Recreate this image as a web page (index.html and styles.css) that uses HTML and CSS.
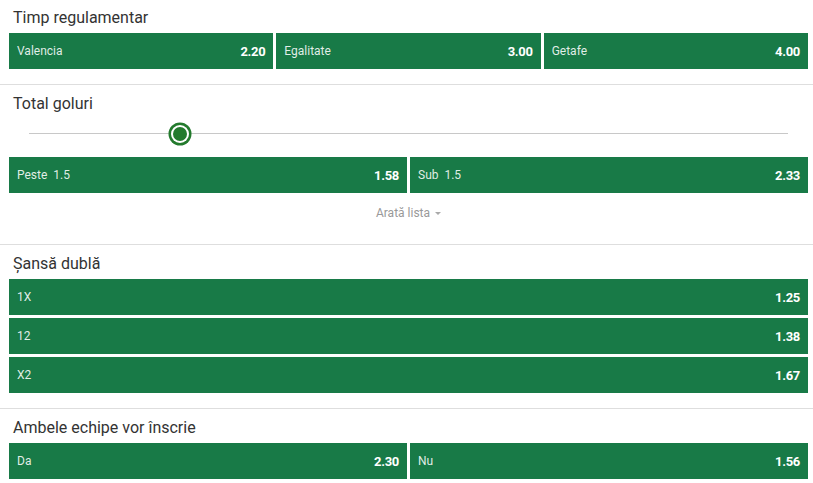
FILE: index.html
```html
<!DOCTYPE html>
<html lang="ro">
<head>
    <meta charset="UTF-8">
    <meta name="viewport" content="width=device-width, initial-scale=1.0">
    <title>Pariuri - Valencia vs Getafe</title>
    <link rel="stylesheet" href="styles.css">
</head>
<body>
    <div class="market first">
        <h3 class="market-title">Timp regulamentar</h3>
        <div class="odds-row cols-3">
            <button class="odd"><span class="odd-label">Valencia</span><span class="odd-price">2.20</span></button>
            <button class="odd"><span class="odd-label">Egalitate</span><span class="odd-price">3.00</span></button>
            <button class="odd"><span class="odd-label">Getafe</span><span class="odd-price">4.00</span></button>
        </div>
    </div>

    <div class="market">
        <h3 class="market-title">Total goluri</h3>
        <div class="slider">
            <div class="slider-track"></div>
            <div class="slider-knob"></div>
        </div>
        <div class="odds-row cols-2">
            <button class="odd"><span class="odd-label">Peste&nbsp; 1.5</span><span class="odd-price">1.58</span></button>
            <button class="odd"><span class="odd-label">Sub&nbsp; 1.5</span><span class="odd-price">2.33</span></button>
        </div>
        <div class="show-more">
            Arată lista
            <svg class="caret" width="6" height="3" viewBox="0 0 6 3"><path d="M0 0h6L3 3z" fill="#aaa"/></svg>
        </div>
    </div>

    <div class="market">
        <h3 class="market-title">Șansă dublă</h3>
        <div class="odds-list">
            <button class="odd"><span class="odd-label">1X</span><span class="odd-price">1.25</span></button>
            <button class="odd"><span class="odd-label">12</span><span class="odd-price">1.38</span></button>
            <button class="odd"><span class="odd-label">X2</span><span class="odd-price">1.67</span></button>
        </div>
    </div>

    <div class="market last">
        <h3 class="market-title">Ambele echipe vor înscrie</h3>
        <div class="odds-row cols-2">
            <button class="odd"><span class="odd-label">Da</span><span class="odd-price">2.30</span></button>
            <button class="odd"><span class="odd-label">Nu</span><span class="odd-price">1.56</span></button>
        </div>
    </div>
</body>
</html>
```

FILE: styles.css
```css
body {
    font-family: Roboto, "Liberation Sans", Arial, sans-serif;
    margin: 0;
    background: #fff;
    color: #333;
}

.market {
    padding: 9px 5px 15px 9px;
    border-bottom: 1px solid #dedede;
}
.market.first {
    padding-top: 8px;
}
.market.last {
    border-bottom: none;
    padding-bottom: 4px;
}

.market-title {
    margin: 0 0 5px 4px;
    font-size: 16px;
    font-weight: 400;
    line-height: 20px;
    color: #333;
}

.odds-row {
    display: grid;
    gap: 3px;
}
.cols-3 {
    grid-template-columns: repeat(3, 1fr);
}
.cols-2 {
    grid-template-columns: repeat(2, 1fr);
}
.odds-list {
    display: flex;
    flex-direction: column;
    gap: 3px;
}

.odd {
    display: flex;
    align-items: center;
    justify-content: space-between;
    height: 36px;
    margin: 0;
    padding: 0 8px 0 8px;
    background-color: #187a47;
    border: none;
    border-radius: 0;
    font-family: inherit;
    cursor: pointer;
}
.odd-label {
    font-size: 12px;
    color: rgba(255, 255, 255, 0.88);
}
.odd-price {
    font-size: 13px;
    font-weight: 700;
    color: #fff;
    letter-spacing: -0.3px;
}

.slider {
    position: relative;
    height: 24px;
    margin: 8px 20px 11px 20px;
}
.slider-track {
    position: absolute;
    left: 0;
    right: 0;
    top: 11px;
    height: 1px;
    background: #c8c8c8;
}
.slider-knob {
    position: absolute;
    left: 151px;
    top: 5px;
    width: 14px;
    height: 14px;
    margin-left: -7px;
    border-radius: 50%;
    background: #237a2d;
    box-shadow: 0 0 0 2px #fff, 0 0 0 4.5px #237a2d;
}

.show-more {
    padding: 12px 0 8px 0;
    text-align: center;
    font-size: 12px;
    line-height: 16px;
    color: #999;
}
.caret {
    margin-left: 2px;
    vertical-align: 2px;
}
```
